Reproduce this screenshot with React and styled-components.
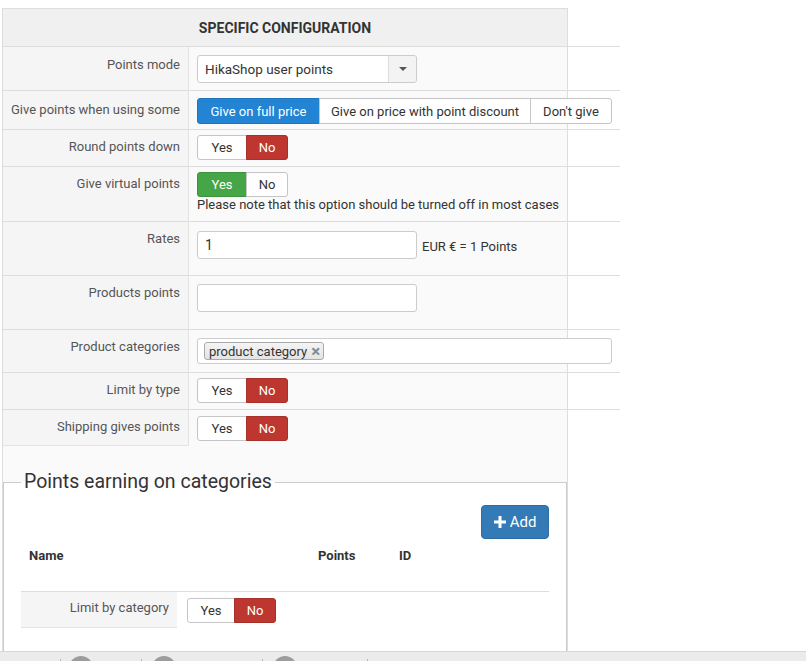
import React from 'react';
import styled, { createGlobalStyle } from 'styled-components';

const Global = createGlobalStyle`
  html, body { margin: 0; padding: 0; background: #fff; }
  body {
    font-family: Roboto, "Liberation Sans", Arial, sans-serif;
    font-size: 13px;
    color: #333;
  }
  *, *::before, *::after { box-sizing: border-box; }
`;

const Page = styled.div`
  width: 806px;
  height: 661px;
  overflow: hidden;
  padding: 8px 0 0 2px;
`;

const Panel = styled.div`
  width: 566px;
  min-height: 720px;
  background: #fafafa;
  border: 1px solid #ddd;
  border-bottom: none;
`;

const PanelHeader = styled.div`
  height: 37px;
  display: flex;
  align-items: center;
  justify-content: center;
  background: #f0f0f0;
  font-weight: bold;
  font-size: 14px;
  color: #333;
  text-transform: uppercase;
`;

const ConfigTable = styled.div`
  width: 617px;
`;

const Row = styled.div`
  display: grid;
  grid-template-columns: ${p => p.$labelW || 186}px 1fr;
  border-top: ${p => (p.$noTop ? 'none' : '1px solid #ddd')};
`;

const Label = styled.div`
  background: #f5f5f5;
  border-right: ${p => (p.$noRight ? 'none' : '1px solid #e3e3e3')};
  border-bottom: ${p => (p.$bottom ? '1px solid #e3e3e3' : 'none')};
  text-align: right;
  padding: ${p => p.$pt ?? 8}px 8px 0 0;
  line-height: 18px;
  color: #555;
`;

const Value = styled.div`
  padding: ${p => p.$pad || '8px 8px 8px 8px'};
`;

const SelectBox = styled.div`
  width: 220px;
  height: 28px;
  display: flex;
  border: 1px solid #ccc;
  border-radius: 3px;
  background: #fff;
  font-size: 13.5px;
  color: #333;
`;

const SelectText = styled.div`
  flex: 1;
  display: flex;
  align-items: center;
  padding-left: 7px;
`;

const SelectArrow = styled.div`
  width: 28px;
  display: flex;
  align-items: center;
  justify-content: center;
  border-left: 1px solid #ddd;
  background: #f3f3f3;
  border-radius: 0 3px 3px 0;
  &::after {
    content: '';
    border-left: 4px solid transparent;
    border-right: 4px solid transparent;
    border-top: 4px solid #555;
  }
`;

const Group = styled.div`
  display: flex;
`;

const TONES = {
  blue: { bg: '#2384d3', bd: '#1f76be' },
  red: { bg: '#bd362f', bd: '#a8302a' },
  green: { bg: '#46a546', bd: '#3d923d' },
};

const Seg = styled.span`
  display: inline-flex;
  align-items: center;
  justify-content: center;
  width: ${p => p.$w}px;
  height: ${p => p.$h || 25}px;
  font-size: 13px;
  background: ${p => (p.$tone ? TONES[p.$tone].bg : '#fff')};
  color: ${p => (p.$tone ? '#fff' : '#333')};
  border: 1px solid ${p => (p.$tone ? TONES[p.$tone].bd : '#c5c5c5')};
  & + & { margin-left: -1px; }
  &:first-child { border-radius: 3px 0 0 3px; }
  &:last-child { border-radius: 0 3px 3px 0; }
`;

const Note = styled.div`
  line-height: 14px;
  margin-top: 1px;
  color: #333;
`;

const InlineLine = styled.div`
  display: flex;
  align-items: flex-start;
  gap: 5px;
`;

const Unit = styled.span`
  margin-top: 7px;
  line-height: 18px;
`;

const TextInput = styled.div`
  width: ${p => p.$w || 220}px;
  height: ${p => p.$h || 28}px;
  margin-bottom: ${p => p.$mb ?? 9}px;
  display: flex;
  align-items: center;
  padding: 0 7px;
  border: 1px solid #ccc;
  border-radius: 3px;
  background: #fff;
  font-size: 14px;
  color: #333;
`;

const Tag = styled.span`
  display: inline-flex;
  align-items: center;
  gap: 4px;
  height: 18px;
  padding: 0 3px 0 4px;
  margin-left: -1px;
  border: 1px solid #aaa;
  border-radius: 3px;
  background: linear-gradient(#f4f4f4, #e4e4e4);
  font-size: 13px;
  color: #333;
`;

const TagClose = styled.span`
  font-size: 17px;
  font-weight: bold;
  color: #8a8a8a;
  line-height: 1;
`;

const Fieldset = styled.fieldset`
  margin: 22px 0 0 0;
  padding: 0 17px 60px;
  min-width: 0;
  border: 1px solid #ccc;
  background: #fff;
`;

const Legend = styled.legend`
  padding: 0 3px;
  font-size: 19.5px;
  line-height: 28px;
  color: #333;
`;

const Toolbar = styled.div`
  display: flex;
  justify-content: flex-end;
  margin-top: 9px;
`;

const AddButton = styled.button`
  display: inline-flex;
  align-items: center;
  gap: 4px;
  height: 34px;
  width: 68px;
  justify-content: center;
  padding: 0;
  border: 1px solid #2e6da4;
  border-radius: 4px;
  background: #337ab7;
  color: #fff;
  font-family: inherit;
  font-size: 15px;
`;

const HeadRow = styled.div`
  display: grid;
  grid-template-columns: 289px 81px 1fr;
  padding: 8px 0 26px;
  border-bottom: 1px solid #ddd;
  line-height: 18px;
`;

const HeadCell = styled.div`
  padding-left: 8px;
  font-weight: bold;
  color: #333;
`;

const BarWrap = styled.div`
  position: fixed;
  left: 0;
  right: 0;
  bottom: 0;
  height: 10px;
  overflow: hidden;
  display: flex;
  background: #ebebeb;
  border-top: 1px solid #d8d8d8;
  padding-left: 60px;
`;

const Tab = styled.div`
  position: relative;
  width: ${p => p.$w}px;
  padding-left: ${p => p.$pl}px;
  &::before {
    content: '';
    position: absolute;
    left: 0;
    top: 7px;
    width: 1px;
    height: 20px;
    background: #b5b5b5;
  }
`;

const Dot = styled.div`
  width: 24px;
  height: 24px;
  margin-top: 4px;
  border-radius: 50%;
  background: #9c9c9c;
`;

const PlusIcon = () => (
  <svg width="12" height="12" viewBox="0 0 12 12" aria-hidden="true">
    <path d="M4.5 0h3v4.5H12v3H7.5V12h-3V7.5H0v-3h4.5z" fill="#fff" />
  </svg>
);

const YesNo = ({ yes, tone, w = [50, 42] }) => (
  <Group>
    <Seg $w={w[0]} $tone={yes ? tone : undefined}>Yes</Seg>
    <Seg $w={w[1]} $tone={!yes ? tone : undefined}>No</Seg>
  </Group>
);

export default function App() {
  return (
    <>
      <Global />
      <Page>
        <Panel>
          <PanelHeader>Specific configuration</PanelHeader>
          <ConfigTable>
            <Row>
              <Label $pt={9}>Points mode</Label>
              <Value $pad="8px 8px 7px">
                <SelectBox>
                  <SelectText>HikaShop user points</SelectText>
                  <SelectArrow />
                </SelectBox>
              </Value>
            </Row>
            <Row>
              <Label $pt={10}>Give points when using some</Label>
              <Value $pad="7px 8px 5px">
                <Group>
                  <Seg $w={123} $h={26} $tone="blue">Give on full price</Seg>
                  <Seg $w={212} $h={26}>Give on price with point discount</Seg>
                  <Seg $w={82} $h={26}>Don't give</Seg>
                </Group>
              </Value>
            </Row>
            <Row>
              <Label>Round points down</Label>
              <Value $pad="5px 8px 6px">
                <YesNo yes={false} tone="red" />
              </Value>
            </Row>
            <Row>
              <Label>Give virtual points</Label>
              <Value $pad="5px 8px 9px">
                <YesNo yes={true} tone="green" />
                <Note>Please note that this option should be turned off in most cases</Note>
              </Value>
            </Row>
            <Row>
              <Label>Rates</Label>
              <Value $pad="9px 8px 7px">
                <InlineLine>
                  <TextInput>1</TextInput>
                  <Unit>EUR € = 1 Points</Unit>
                </InlineLine>
              </Value>
            </Row>
            <Row>
              <Label>Products points</Label>
              <Value $pad="8px 8px 8px">
                <TextInput />
              </Value>
            </Row>
            <Row>
              <Label>Product categories</Label>
              <Value $pad="8px 8px 8px">
                <TextInput $w={415} $h={26} $mb={0}>
                  <Tag>
                    product category <TagClose>×</TagClose>
                  </Tag>
                </TextInput>
              </Value>
            </Row>
            <Row>
              <Label>Limit by type</Label>
              <Value $pad="5px 8px 6px">
                <YesNo yes={false} tone="red" />
              </Value>
            </Row>
            <Row>
              <Label $bottom>Shipping gives points</Label>
              <Value $pad="6px 8px 5px">
                <YesNo yes={false} tone="red" />
              </Value>
            </Row>
          </ConfigTable>

          <Fieldset>
            <Legend>Points earning on categories</Legend>
            <Toolbar>
              <AddButton type="button">
                <PlusIcon />
                Add
              </AddButton>
            </Toolbar>
            <HeadRow>
              <HeadCell>Name</HeadCell>
              <HeadCell>Points</HeadCell>
              <HeadCell>ID</HeadCell>
            </HeadRow>
            <Row $labelW={156} $noTop>
              <Label $noRight $bottom $pt={7}>Limit by category</Label>
              <Value $pad="6px 10px 5px">
                <YesNo yes={false} tone="red" w={[48, 42]} />
              </Value>
            </Row>
          </Fieldset>
        </Panel>
      </Page>
      <BarWrap>
        <Tab $w={81} $pl={9}><Dot /></Tab>
        <Tab $w={121} $pl={11}><Dot /></Tab>
        <Tab $w={105} $pl={11}><Dot /></Tab>
        <Tab $w={60} $pl={0} />
      </BarWrap>
    </>
  );
}
